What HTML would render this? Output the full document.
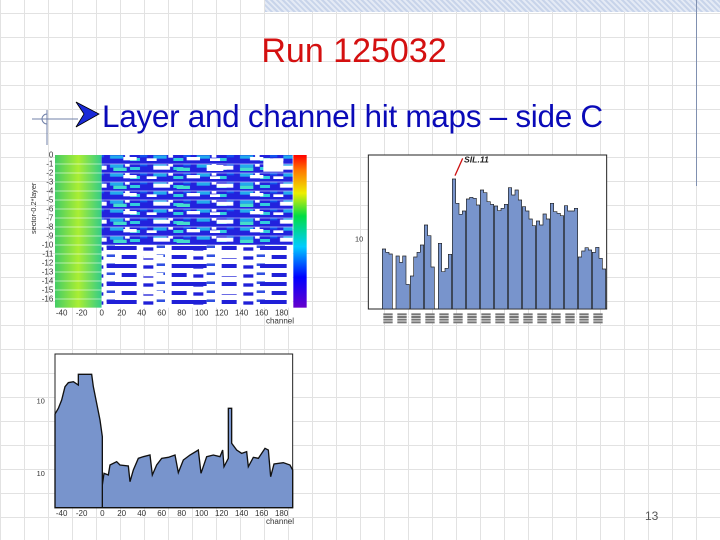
<!DOCTYPE html>
<html><head><meta charset="utf-8"><style>
body{margin:0;width:720px;height:540px;overflow:hidden;position:relative;background:#fff;font-family:"Liberation Sans","DejaVu Sans",sans-serif;}
.grid{position:absolute;left:0;top:0;width:720px;height:540px;
background-image:repeating-linear-gradient(90deg,transparent 0 23px,#e2e2e2 23px 24px),repeating-linear-gradient(0deg,transparent 0 23px,#e2e2e2 23px 24px);
background-position:1px 0,0 1px}
.band{position:absolute;left:265px;top:0;width:455px;height:12px;background:repeating-linear-gradient(45deg,#c8d4ea 0 2px,#e4eaf5 2px 4px)}
.vl{position:absolute;left:696px;top:0;width:1px;height:186px;background:#8090b0}
.title{position:absolute;left:0;width:708px;text-align:center;top:32px;font-size:34px;color:#d41010}
.sub{position:absolute;left:102px;top:98px;font-size:31.5px;color:#0a0ab8;white-space:nowrap;letter-spacing:-0.3px}
.pn{position:absolute;left:645px;top:509px;font-size:12px;color:#555}
svg{position:absolute}
</style></head><body>
<div class="grid"></div>
<div class="band"></div>
<div class="vl"></div>
<div class="title">Run 125032</div>
<svg style="left:22px;top:100px" width="80" height="46" viewBox="0 0 80 46">
<line x1="10" y1="19" x2="56" y2="19" stroke="#7080a8" stroke-width="1"/>
<line x1="25" y1="10" x2="25" y2="45" stroke="#7080a8" stroke-width="1"/>
<path d="M25 14 A5 5 0 0 0 25 24" fill="none" stroke="#7080a8"/>
<path d="M54 2 L77 14 L54 27 L62 14 Z" fill="#1a2ad8" stroke="#000" stroke-width="0.8"/>
</svg>
<div class="sub">Layer and channel hit maps – side C</div>

<!-- plot 1 -->
<svg style="left:20px;top:145px" width="300" height="190" viewBox="0 0 900 570">
<defs>
<pattern id="pa" width="130" height="27" patternUnits="userSpaceOnUse">
<rect width="130" height="27" fill="#2222dd"/>
<rect x="10" y="4" width="40" height="10" fill="#22aaee"/>
<rect x="70" y="12" width="30" height="9" fill="#33ccdd"/>
<rect x="55" y="3" width="14" height="8" fill="#fff"/>
<rect x="100" y="2" width="22" height="8" fill="#1155ee"/>
</pattern>
<pattern id="pa2" width="190" height="54" patternUnits="userSpaceOnUse">
<rect x="20" y="8" width="50" height="12" fill="#fff"/>
<rect x="120" y="36" width="40" height="10" fill="#fff"/>
<rect x="90" y="14" width="40" height="10" fill="#44ddcc"/>
<rect x="0" y="40" width="30" height="8" fill="#fff"/>
</pattern>
<pattern id="pb" width="150" height="27" patternUnits="userSpaceOnUse">
<rect width="150" height="27" fill="#fff"/>
<rect x="5" y="6" width="45" height="12" fill="#2020d8"/>
<rect x="70" y="10" width="30" height="10" fill="#2020d8"/>
<rect x="110" y="4" width="25" height="8" fill="#3050e0"/>
</pattern>
<pattern id="pb2" width="230" height="54" patternUnits="userSpaceOnUse">
<rect x="30" y="33" width="70" height="12" fill="#2020d8"/>
<rect x="140" y="6" width="60" height="10" fill="#fff"/>
</pattern>
<linearGradient id="gl" x1="0" x2="1"><stop offset="0" stop-color="#44cc66"/><stop offset=".5" stop-color="#aaee33"/><stop offset="1" stop-color="#33cc88"/></linearGradient>
<linearGradient id="cb" x1="0" y1="1" x2="0" y2="0"><stop offset="0" stop-color="#6600cc"/><stop offset=".2" stop-color="#0000ff"/><stop offset=".4" stop-color="#00ccff"/><stop offset=".6" stop-color="#00dd44"/><stop offset=".75" stop-color="#eeee00"/><stop offset=".9" stop-color="#ff7700"/><stop offset="1" stop-color="#ff0000"/></linearGradient>
</defs>
<rect x="105" y="30" width="140" height="458" fill="url(#gl)"/>
<rect x="245" y="30" width="573" height="270" fill="url(#pa)"/>
<rect x="245" y="30" width="573" height="270" fill="url(#pa2)"/>
<rect x="245" y="300" width="573" height="188" fill="url(#pb)"/>
<rect x="245" y="300" width="573" height="188" fill="url(#pb2)"/>
<rect x="730" y="40" width="60" height="40" fill="#fff"/>
<rect x="560" y="60" width="50" height="18" fill="#fff"/>
<g stroke="#fff" stroke-width="2" opacity=".7">
<line x1="105" y1="57" x2="818" y2="57"/><line x1="105" y1="84" x2="818" y2="84"/><line x1="105" y1="111" x2="818" y2="111"/><line x1="105" y1="138" x2="818" y2="138"/><line x1="105" y1="165" x2="818" y2="165"/><line x1="105" y1="192" x2="818" y2="192"/><line x1="105" y1="219" x2="818" y2="219"/><line x1="105" y1="246" x2="818" y2="246"/><line x1="105" y1="273" x2="818" y2="273"/><line x1="105" y1="300" x2="818" y2="300"/><line x1="105" y1="327" x2="818" y2="327"/><line x1="105" y1="354" x2="818" y2="354"/><line x1="105" y1="381" x2="818" y2="381"/><line x1="105" y1="408" x2="818" y2="408"/><line x1="105" y1="435" x2="818" y2="435"/><line x1="105" y1="462" x2="818" y2="462"/>
</g>
<rect x="820" y="30" width="40" height="458" fill="url(#cb)"/>
<g font-size="24" fill="#333" text-anchor="end">
<text x="100" y="38">0</text><text x="100" y="65">-1</text><text x="100" y="92">-2</text><text x="100" y="119">-3</text><text x="100" y="146">-4</text><text x="100" y="173">-5</text><text x="100" y="200">-6</text><text x="100" y="227">-7</text><text x="100" y="254">-8</text><text x="100" y="281">-9</text><text x="100" y="308">-10</text><text x="100" y="335">-11</text><text x="100" y="362">-12</text><text x="100" y="389">-13</text><text x="100" y="416">-14</text><text x="100" y="443">-15</text><text x="100" y="470">-16</text>
</g>
<g font-size="24" fill="#333" text-anchor="middle">
<text x="125" y="512">-40</text><text x="185" y="512">-20</text><text x="245" y="512">0</text><text x="305" y="512">20</text><text x="365" y="512">40</text><text x="425" y="512">60</text><text x="485" y="512">80</text><text x="545" y="512">100</text><text x="605" y="512">120</text><text x="665" y="512">140</text><text x="725" y="512">160</text><text x="785" y="512">180</text>
<text x="780" y="536" font-size="24">channel</text>
</g>
<text x="48" y="190" font-size="22" fill="#333" text-anchor="middle" transform="rotate(-90 48 190)">sector-0.2*layer</text>
</svg>

<!-- plot 2 -->
<svg style="left:340px;top:145px" width="280" height="190" viewBox="0 0 840 570">
<rect x="85" y="30" width="715" height="462" fill="#fff" stroke="#222" stroke-width="3"/>
<g fill="#7894cc" stroke="#222" stroke-width="2">
<path d="M127 492V312h10v10h10v5h10v165z"/>
<path d="M168 492V333h10v19h10v-19h10v85h10v74z"/>
<path d="M211 492V393h10v-57h10v-14h10v-22h10v192z"/>
<path d="M253 492V240h10v32h10v94h10v126z"/>
<path d="M295 492V295h10v85h10v-10h10v-42h10v164z"/>
<path d="M337 492V102h10v73h10v33h10v-10h10v294z"/>
<path d="M379 492V162h10v-5h10v3h10v20h10v312z"/>
<path d="M421 492V135h10v8h10v27h10v8h10v314z"/>
<path d="M463 492V183h10v14h10v-7h10v-12h10v314z"/>
<path d="M505 492V128h10v22h10v-15h10v30h10v327z"/>
<path d="M547 492V185h10v13h10v24h10v20h10v250z"/>
<path d="M589 492V228h10v12h10v-33h10v15h10v270z"/>
<path d="M631 492V175h10v25h10v5h10v7h10v280z"/>
<path d="M673 492V182h10v16h10v0h10v-8h10v302z"/>
<path d="M715 492V336h10v-18h10v-10h10v7h10v177z"/>
<path d="M757 492V322h10v-15h10v33h10v32h10v120z"/>
</g>
<line x1="345" y1="92" x2="368" y2="40" stroke="#cc1111" stroke-width="4"/>
<text x="372" y="52" font-size="26" font-style="italic" font-weight="bold" fill="#222">SIL.11</text>
<text x="45" y="290" font-size="22" fill="#333">10</text>
<g fill="#777">
<rect x="130" y="505" width="28" height="30"/><rect x="172" y="505" width="28" height="30"/><rect x="214" y="505" width="28" height="30"/><rect x="256" y="505" width="28" height="30"/><rect x="298" y="505" width="28" height="30"/><rect x="340" y="505" width="28" height="30"/><rect x="382" y="505" width="28" height="30"/><rect x="424" y="505" width="28" height="30"/><rect x="466" y="505" width="28" height="30"/><rect x="508" y="505" width="28" height="30"/><rect x="550" y="505" width="28" height="30"/><rect x="592" y="505" width="28" height="30"/><rect x="634" y="505" width="28" height="30"/><rect x="676" y="505" width="28" height="30"/><rect x="718" y="505" width="28" height="30"/><rect x="760" y="505" width="28" height="30"/>
</g>
<g stroke="#fff" stroke-width="2"><line x1="120" y1="512" x2="800" y2="512"/><line x1="120" y1="520" x2="800" y2="520"/><line x1="120" y1="528" x2="800" y2="528"/></g>
</svg>

<!-- plot 3 -->
<svg style="left:20px;top:340px" width="300" height="195" viewBox="0 0 900 585">
<rect x="105" y="42" width="713" height="461" fill="#fff" stroke="#222" stroke-width="3"/>
<path fill="#7894cc" stroke="#111" stroke-width="4" d="M105 503V222L115 205L125 180L135 140L145 128L160 125L175 135L175 103L215 103L220 140L232 200L240 240L247 290V503V435L252 400L265 405L270 375L290 365L300 375L325 378L330 425L340 390L355 355L370 350L390 345L397 405L410 375L425 355L445 352L465 345L475 398L490 360L510 345L535 330L543 400L560 350L580 345L600 350L608 330L612 380L625 355L625 205L635 205L635 310L650 330L665 340L680 335L685 380L700 352L715 355L735 325L745 330L752 410L762 372L790 368L810 375L818 390V503Z"/>
<text x="50" y="190" font-size="22" fill="#333">10</text>
<text x="50" y="408" font-size="22" fill="#333">10</text>
<g font-size="24" fill="#333" text-anchor="middle">
<text x="125" y="528">-40</text><text x="185" y="528">-20</text><text x="247" y="528">0</text><text x="305" y="528">20</text><text x="365" y="528">40</text><text x="425" y="528">60</text><text x="485" y="528">80</text><text x="545" y="528">100</text><text x="605" y="528">120</text><text x="665" y="528">140</text><text x="725" y="528">160</text><text x="785" y="528">180</text>
<text x="780" y="552" font-size="24">channel</text>
</g>
</svg>
<div class="pn">13</div>
</body></html>
